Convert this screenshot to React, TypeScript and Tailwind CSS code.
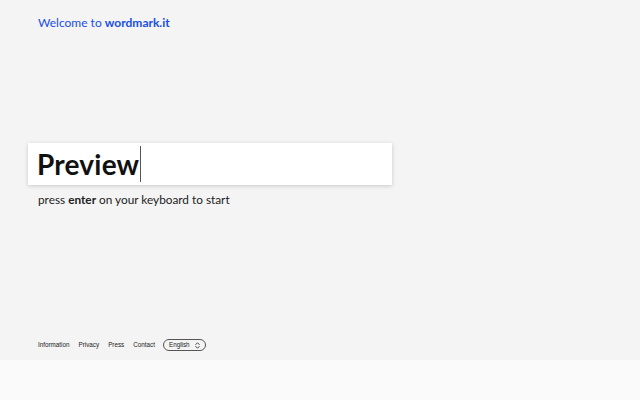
export default function App() {
  return (
    <div className="w-[640px] h-[400px] flex flex-col bg-[#fafafa]" style={{ fontFamily: "Lato, 'Noto Sans', sans-serif" }}>
      <div className="h-[360px] bg-[#f4f4f4] flex flex-col">
        <div className="pl-[38px] pt-[15px] text-[12px] leading-[16px] text-[#1a4fe6]">
          Welcome to <span className="font-bold">wordmark.it</span>
        </div>
        <div className="mt-[112px] ml-[28px] w-[364px] h-[42px] bg-white shadow-[0_1px_4px_rgba(0,0,0,0.18)] flex items-center pl-[9px]">
          <span className="text-[28px] font-bold text-[#111] leading-none tracking-[0.2px] -mt-[1px]">Preview</span>
          <span className="w-px h-[36px] bg-[#555] ml-[1px]"></span>
        </div>
        <div className="pl-[38px] mt-[8px] text-[11.8px] leading-[14px] text-[#222]">
          press <span className="font-bold">enter</span> on your keyboard to start
        </div>
        <div className="mt-auto mb-[9px] pl-[38px] flex items-center text-[6.3px] text-[#222]" style={{ fontFamily: "'Liberation Sans', Arial, sans-serif" }}>
          <span>Information</span>
          <span className="ml-[9px]">Privacy</span>
          <span className="ml-[9px]">Press</span>
          <span className="ml-[9px]">Contact</span>
          <span className="ml-[8px] h-[12px] w-[43px] rounded-full border border-[#555] flex items-center pl-[5px] gap-[5px] bg-[#f4f4f4]">
            English
            <svg width="5" height="7" viewBox="0 0 5 7"><path d="M0.5 2.8L2.5 0.8L4.5 2.8M0.5 4.2L2.5 6.2L4.5 4.2" fill="none" stroke="#333" strokeWidth="0.9" /></svg>
          </span>
        </div>
      </div>
    </div>
  );
}
